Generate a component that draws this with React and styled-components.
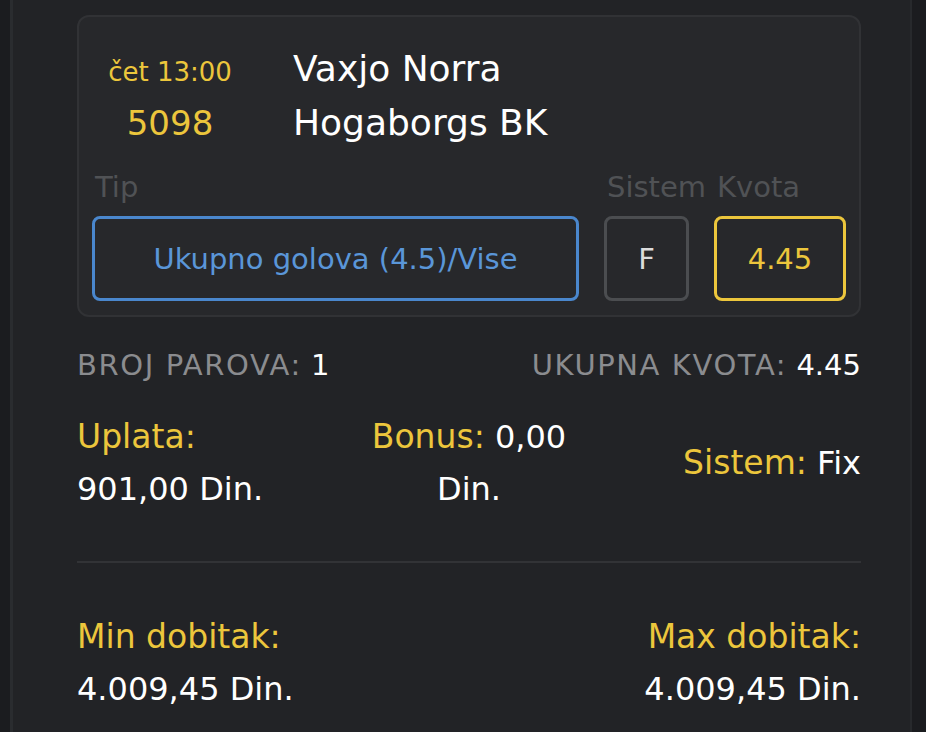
import React from "react";
import styled, { createGlobalStyle } from "styled-components";

const GlobalStyle = createGlobalStyle`
    html, body {
        margin: 0;
        padding: 0;
        background: #1b1c1f;
        overflow: hidden;
    }
    body {
        font-family: "DejaVu Sans", "Liberation Sans", sans-serif;
        color: #ffffff;
    }
`;

const YELLOW = "#ecc63c";

const Panel = styled.div`
    box-sizing: border-box;
    margin-left: 10px;
    width: 902px;
    min-height: 732px;
    padding: 15px 49px 20px 64px;
    background: #222326;
    border-left: 3px solid #2a2c2f;
    border-right: 2px solid #27292c;
`;

const Card = styled.div`
    box-sizing: border-box;
    background: #27282b;
    border: 2px solid #313235;
    border-radius: 12px;
    padding: 25px 13px 14px;
`;

const MatchGrid = styled.div`
    display: grid;
    grid-template-columns: 156px 1fr;
    column-gap: 45px;
`;

const Cell = styled.div`
    box-sizing: border-box;
    height: 54px;
    line-height: ${(p) => 54 - (p.drop || 0) * 2}px;
    padding-top: ${(p) => (p.drop || 0) * 2}px;
    font-size: ${(p) => p.size}px;
    color: ${(p) => p.color || "#ffffff"};
    text-align: ${(p) => p.align || "left"};
    white-space: nowrap;
`;

const PickRow = styled.div`
    display: grid;
    grid-template-columns: 1fr 85px 132px;
    column-gap: 25px;
    margin-top: 20px;
`;

const PickCol = styled.div`
    display: flex;
    flex-direction: column;
    min-width: 0;
`;

const FieldLabel = styled.div`
    font-size: 29px;
    line-height: 35px;
    color: #505255;
    padding-left: 3px;
    margin-bottom: 11px;
    white-space: nowrap;
`;

const FieldBox = styled.div`
    box-sizing: border-box;
    height: 85px;
    display: flex;
    align-items: center;
    justify-content: center;
    border: 3px solid ${(p) => p.border};
    border-radius: 8px;
    font-size: 29px;
    color: ${(p) => p.color};
    white-space: nowrap;
`;

const InfoRow = styled.div`
    display: flex;
    justify-content: space-between;
    margin-top: 31px;
    font-size: 29px;
    line-height: 35px;
`;

const Muted = styled.span`
    color: #8b8c8f;
    letter-spacing: ${(p) => p.spacing}px;
`;

const Strong = styled.span`
    color: #ffffff;
`;

const AmountGrid = styled.div`
    display: grid;
    grid-template-columns: 1fr 1fr 1fr;
    margin-top: 28px;
    font-size: 32px;
    line-height: 52px;
`;

const AmountCol = styled.div`
    display: flex;
    flex-direction: column;
    justify-content: ${(p) => (p.center ? "center" : "flex-start")};
    text-align: ${(p) => p.align || "left"};
`;

const Label = styled.span`
    font-size: 33px;
    color: ${YELLOW};
`;

const Value = styled.span`
    font-size: 32px;
    color: #ffffff;
`;

const Divider = styled.div`
    height: 2px;
    background: #323336;
    margin-top: 46px;
`;

const WinRow = styled.div`
    display: flex;
    justify-content: space-between;
    margin-top: 48px;
    font-size: 32px;
    line-height: 52px;
`;

const WinCol = styled.div`
    display: flex;
    flex-direction: column;
    align-items: ${(p) => (p.right ? "flex-end" : "flex-start")};
`;

export default function App() {
    return (
        <>
            <GlobalStyle />
            <Panel>
                <Card>
                    <MatchGrid>
                        <Cell size={26} color={YELLOW} align="center" drop={3}>
                            čet 13:00
                        </Cell>
                        <Cell size={36}>Vaxjo Norra</Cell>
                        <Cell size={34} color={YELLOW} align="center">
                            5098
                        </Cell>
                        <Cell size={36}>Hogaborgs BK</Cell>
                    </MatchGrid>
                    <PickRow>
                        <PickCol>
                            <FieldLabel>Tip</FieldLabel>
                            <FieldBox border="#4a87cd" color="#5a96d8">
                                Ukupno golova (4.5)/Vise
                            </FieldBox>
                        </PickCol>
                        <PickCol>
                            <FieldLabel>Sistem</FieldLabel>
                            <FieldBox border="#4b4d50" color="#dcdcdc">
                                F
                            </FieldBox>
                        </PickCol>
                        <PickCol>
                            <FieldLabel>Kvota</FieldLabel>
                            <FieldBox border={YELLOW} color={YELLOW}>
                                4.45
                            </FieldBox>
                        </PickCol>
                    </PickRow>
                </Card>

                <InfoRow>
                    <span>
                        <Muted spacing={1.6}>BROJ PAROVA:</Muted>{" "}
                        <Strong>1</Strong>
                    </span>
                    <span>
                        <Muted spacing={1.6}>UKUPNA KVOTA:</Muted>{" "}
                        <Strong>4.45</Strong>
                    </span>
                </InfoRow>

                <AmountGrid>
                    <AmountCol>
                        <Label>Uplata:</Label>
                        <Value>901,00 Din.</Value>
                    </AmountCol>
                    <AmountCol align="center">
                        <div>
                            <Label>Bonus:</Label> <Value>0,00 Din.</Value>
                        </div>
                    </AmountCol>
                    <AmountCol align="right" center>
                        <div>
                            <Label>Sistem:</Label> <Value>Fix</Value>
                        </div>
                    </AmountCol>
                </AmountGrid>

                <Divider />

                <WinRow>
                    <WinCol>
                        <Label>Min dobitak:</Label>
                        <Value>4.009,45 Din.</Value>
                    </WinCol>
                    <WinCol right>
                        <Label>Max dobitak:</Label>
                        <Value>4.009,45 Din.</Value>
                    </WinCol>
                </WinRow>
            </Panel>
        </>
    );
}
